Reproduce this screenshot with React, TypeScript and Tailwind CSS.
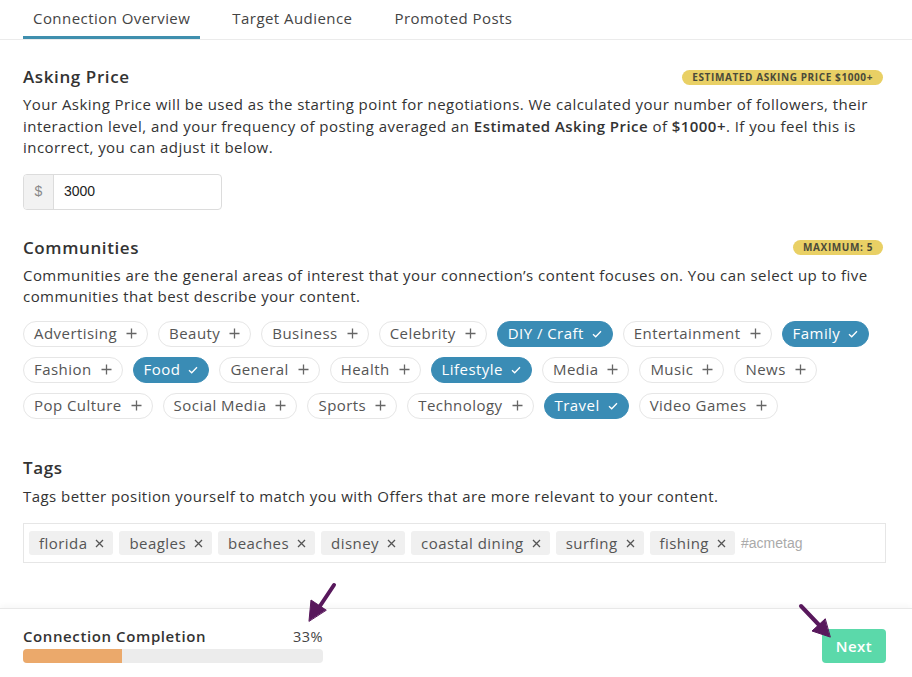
import React from "react";

const communities: { name: string; on: boolean }[][] = [
  [
    { name: "Advertising", on: false },
    { name: "Beauty", on: false },
    { name: "Business", on: false },
    { name: "Celebrity", on: false },
    { name: "DIY / Craft", on: true },
    { name: "Entertainment", on: false },
    { name: "Family", on: true },
  ],
  [
    { name: "Fashion", on: false },
    { name: "Food", on: true },
    { name: "General", on: false },
    { name: "Health", on: false },
    { name: "Lifestyle", on: true },
    { name: "Media", on: false },
    { name: "Music", on: false },
    { name: "News", on: false },
  ],
  [
    { name: "Pop Culture", on: false },
    { name: "Social Media", on: false },
    { name: "Sports", on: false },
    { name: "Technology", on: false },
    { name: "Travel", on: true },
    { name: "Video Games", on: false },
  ],
];

const tags = ["florida", "beagles", "beaches", "disney", "coastal dining", "surfing", "fishing"];

function Plus() {
  return (
    <svg width="11" height="11" viewBox="0 0 11 11" className="ml-[9px]">
      <path d="M5.5 0.5v10M0.5 5.5h10" stroke="#666" strokeWidth="1.3" />
    </svg>
  );
}
function Check() {
  return (
    <svg width="10" height="8" viewBox="0 0 10 8" className="ml-[8px]">
      <path d="M1 4.2l2.7 2.6L9 1.2" stroke="#fff" strokeWidth="1.3" fill="none" />
    </svg>
  );
}
function X() {
  return (
    <svg width="9" height="9" viewBox="0 0 9 9" className="ml-[8px]">
      <path d="M1 1l7 7M8 1l-7 7" stroke="#555" strokeWidth="1.3" />
    </svg>
  );
}

export default function App() {
  return (
    <div
      className="relative w-[912px] h-[677px] bg-white overflow-hidden text-[#333] tracking-[0.45px]"
      style={{ fontFamily: '"Open Sans", "Liberation Sans", sans-serif' }}
    >
      {/* Tabs */}
      <div className="flex px-[23px] border-b border-[#ebebeb] h-[40px]">
        <div className="px-[10px] h-full flex items-center text-[15px] text-[#444] border-b-[3px] border-[#3f8fae] pt-[1px]">
          Connection Overview
        </div>
        <div className="ml-[22px] px-[10px] h-full flex items-center text-[15px] text-[#444] pb-[2px]">
          Target Audience
        </div>
        <div className="ml-[22px] px-[10px] h-full flex items-center text-[15px] text-[#444] pb-[2px]">
          Promoted Posts
        </div>
      </div>

      <div className="px-[23px] pr-[26px]">
        {/* Asking price */}
        <div className="flex items-center justify-between mt-[26px]">
          <div className="text-[17px] font-semibold text-[#333] leading-[22px] tracking-[0.6px]">Asking Price</div>
          <div className="mr-[3px] bg-[#e9d065] rounded-full px-[10px] h-[15px] flex items-center text-[10px] font-bold text-[#4a4a3a] tracking-[0.6px]">
            ESTIMATED ASKING PRICE $1000+
          </div>
        </div>
        <p className="mt-[6px] text-[15px] leading-[21.5px] text-[#333]">
          Your Asking Price will be used as the starting point for negotiations. We calculated your number of followers, their interaction level, and your frequency of posting averaged an{" "}
          <b className="font-semibold">Estimated Asking Price</b> of <b className="font-semibold">$1000+</b>. If you feel this is incorrect, you can adjust it below.
        </p>
        <div className="mt-[15px] flex w-[199px] h-[36px] border border-[#dcdcdc] rounded-[4px] overflow-hidden">
          <div className="w-[30px] bg-[#f2f2f2] border-r border-[#dcdcdc] flex items-center justify-center text-[14px] text-[#888]" style={{ fontFamily: '"Liberation Sans", Arial, sans-serif' }}>$</div>
          <div className="flex-1 flex items-center px-[10px] text-[14px] text-[#222] tracking-normal" style={{ fontFamily: '"Liberation Sans", Arial, sans-serif' }}>3000</div>
        </div>

        {/* Communities */}
        <div className="flex items-center justify-between mt-[27px]">
          <div className="text-[17px] font-semibold text-[#333] leading-[22px] tracking-[0.6px]">Communities</div>
          <div className="mr-[3px] bg-[#e9d065] rounded-full px-[10px] h-[15px] flex items-center text-[10px] font-bold text-[#4a4a3a] tracking-[0.6px]">
            MAXIMUM: 5
          </div>
        </div>
        <p className="mt-[6px] text-[15px] leading-[21.5px] text-[#333]">
          Communities are the general areas of interest that your connection’s content focuses on. You can select up to five communities that best describe your content.
        </p>
        <div className="mt-[13px] flex flex-col gap-[10px]">
          {communities.map((row, i) => (
            <div key={i} className="flex gap-[10px]">
              {row.map((c) =>
                c.on ? (
                  <div
                    key={c.name}
                    className="h-[26px] rounded-full bg-[#3a8cb5] border border-[#3a8cb5] px-[10px] flex items-center text-[15px] text-white"
                  >
                    {c.name}
                    <Check />
                  </div>
                ) : (
                  <div
                    key={c.name}
                    className="h-[26px] rounded-full border border-[#e6e6e6] px-[10px] flex items-center text-[15px] text-[#555]"
                  >
                    {c.name}
                    <Plus />
                  </div>
                )
              )}
            </div>
          ))}
        </div>

        {/* Tags */}
        <div className="mt-[38px] text-[17px] font-semibold text-[#333] leading-[22px] tracking-[0.6px]">Tags</div>
        <p className="mt-[7px] text-[15px] leading-[21.5px] text-[#333]">
          Tags better position yourself to match you with Offers that are more relevant to your content.
        </p>
        <div className="mt-[16px] h-[40px] border border-[#e6e6e6] flex items-center gap-[6px] px-[5px]">
          {tags.map((t) => (
            <div key={t} className="h-[24px] rounded-[3px] bg-[#f0f0f0] pl-[10px] pr-[9px] flex items-center text-[15px] text-[#555] tracking-[0.45px]">
              {t}
              <X />
            </div>
          ))}
          <div className="text-[14px] text-[#aaa] tracking-normal" style={{ fontFamily: '"Liberation Sans", Arial, sans-serif' }}>#acmetag</div>
        </div>
      </div>

      {/* Footer */}
      <div className="absolute left-0 right-0 bottom-0 h-[69px] border-t border-[#e8e8e8] shadow-[0_-2px_6px_rgba(0,0,0,0.04)] bg-white flex items-center justify-between px-[23px] pr-[26px]">
        <div className="w-[300px] pt-[2px]">
          <div className="flex items-center justify-between">
            <div className="text-[15px] font-semibold text-[#333] tracking-[0.6px]">Connection Completion</div>
            <div className="text-[14.5px] text-[#444]">33%</div>
          </div>
          <div className="mt-[1px] h-[14px] rounded-[4px] bg-[#ececec] overflow-hidden">
            <div className="h-full bg-[#eba96b]" style={{ width: "33%" }} />
          </div>
        </div>
        <div className="h-[34px] w-[64px] mt-[6px] rounded-[4px] bg-[#5bd9aa] text-white font-semibold text-[15px] flex items-center justify-center">
          Next
        </div>
      </div>

      {/* Annotation arrows */}
      <svg className="absolute left-0 top-0 pointer-events-none" width="912" height="677">
        <g fill="#58185c" stroke="#58185c" strokeLinecap="round">
          <line x1="334" y1="585" x2="318" y2="609" strokeWidth="4" />
          <polygon points="309,621 311,600 326,610" strokeWidth="1" />
          <line x1="801" y1="606" x2="820" y2="626" strokeWidth="4" />
          <polygon points="830,637 812,631 825,619" strokeWidth="1" />
        </g>
      </svg>
    </div>
  );
}
